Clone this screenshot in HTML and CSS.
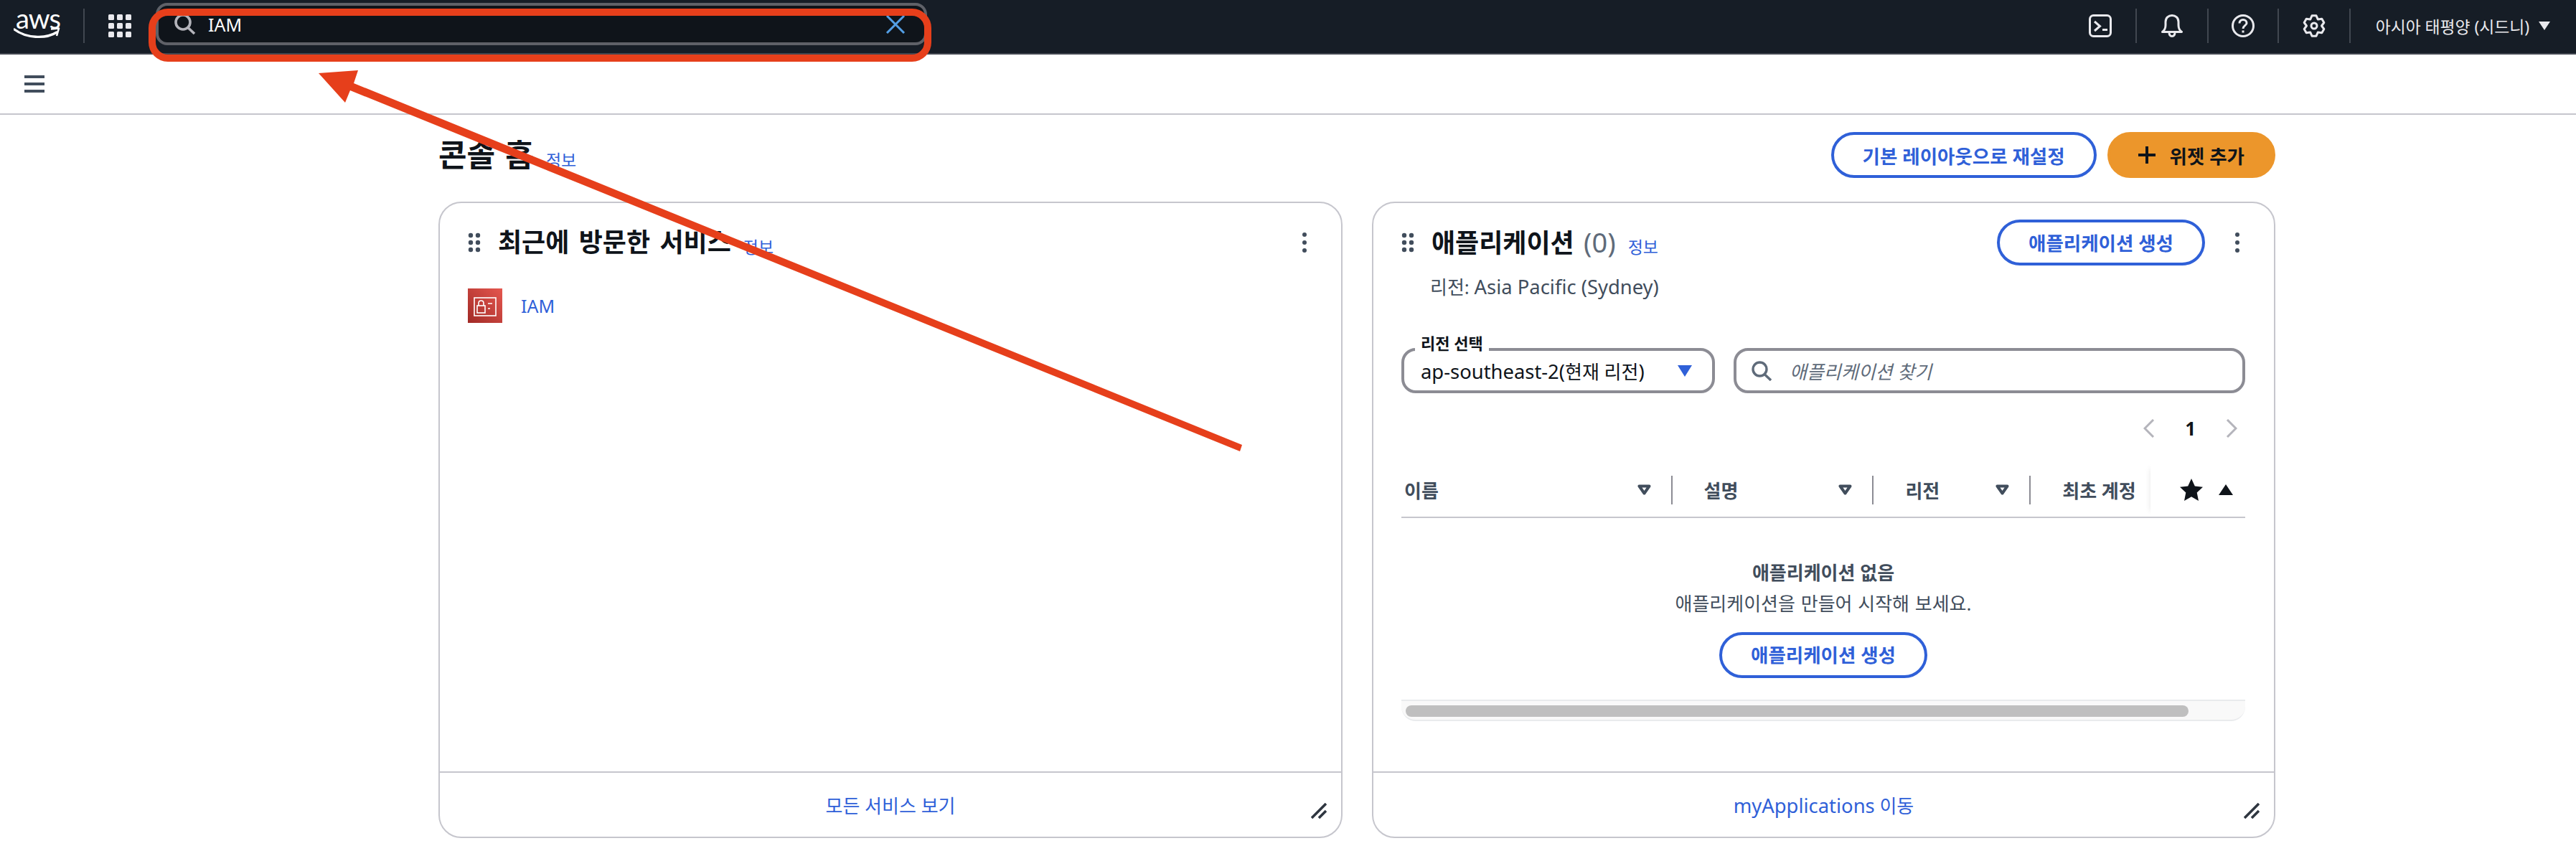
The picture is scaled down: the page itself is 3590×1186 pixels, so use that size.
FILE: index.html
```html
<!DOCTYPE html>
<html lang="ko">
	<head>
		<meta charset="utf-8">
		<title>콘솔 홈</title>
		<link rel="stylesheet" href="styles.css">
	</head>
	<body>
	<header class="topnav">
		<div class="logo">
			<span class="logo_text">aws</span>
			<svg class="logo_smile" width="66" height="20" viewBox="0 0 66 20"><path d="M1 4C17 16 44 18 60 8" fill="none" stroke="#fff" stroke-width="3.4" stroke-linecap="round"/><path d="M52 3.5L63 2.5L60 13" fill="none" stroke="#fff" stroke-width="2.6" stroke-linejoin="round"/></svg>
		</div>
		<span class="nav_sep"></span>
		<svg class="grid_icon" width="32" height="32" viewBox="0 0 32 32" fill="#e9e9ed"><rect width="8" height="8" rx="1.5"/><rect x="12" width="8" height="8" rx="1.5"/><rect x="24" width="8" height="8" rx="1.5"/><rect y="12" width="8" height="8" rx="1.5"/><rect x="12" y="12" width="8" height="8" rx="1.5"/><rect x="24" y="12" width="8" height="8" rx="1.5"/><rect y="24" width="8" height="8" rx="1.5"/><rect x="12" y="24" width="8" height="8" rx="1.5"/><rect x="24" y="24" width="8" height="8" rx="1.5"/></svg>
		<div class="nav_search">
			<svg width="32" height="30" viewBox="0 0 32 30" fill="none" stroke="#b4b4bb" stroke-width="3.6"><circle cx="13" cy="12" r="10"/><path d="M20 19.5L29 28"/></svg>
			<span class="nav_search_text">IAM</span>
			<svg class="nav_clear" width="28" height="26" viewBox="0 0 28 26" fill="none" stroke="#539fe5" stroke-width="3"><path d="M2 1L26 25M26 1L2 25"/></svg>
		</div>
		<div class="nav_right">
			<div class="nav_item">
				<svg width="32" height="32" viewBox="0 0 32 32" fill="none" stroke="#e9e9ed" stroke-width="3"><rect x="1.5" y="1.5" width="29" height="29" rx="5"/><path d="M8 10L15.5 16.5L8 23"/><path d="M19 21.5H26"/></svg>
			</div>
			<div class="nav_item">
				<svg width="30" height="32" viewBox="0 0 30 32" fill="none" stroke="#e9e9ed" stroke-width="3" stroke-linejoin="round"><path d="M1.5 24.5C5 22 6 19 6 15V10.5C6 5 10 1.5 15 1.5S24 5 24 10.5V15C24 19 25 22 28.5 24.5Z"/><path d="M11 25C11 28.5 12.5 30.5 15 30.5S19 28.5 19 25"/></svg>
			</div>
			<div class="nav_item nav_item_short">
				<svg width="32" height="32" viewBox="0 0 32 32" fill="none" stroke="#e9e9ed" stroke-width="3"><circle cx="16" cy="16" r="14.5"/><path d="M11 12.5C11 9.5 13 7.5 16 7.5S21 9.5 21 12.2C21 15.5 16 15.5 16 20"/><path d="M16 22.5V25.5"/></svg>
			</div>
			<div class="nav_item">
				<svg width="32" height="32" viewBox="0 0 32 32" fill="none" stroke="#e9e9ed" stroke-width="3" stroke-linejoin="round"><path d="M13 1.8H19L21.25 6.9L26.8 6.3L29.8 11.5L26.5 16L29.8 20.5L26.8 25.7L21.25 25.1L19 30.2H13L10.75 25.1L5.2 25.7L2.2 20.5L5.5 16L2.2 11.5L5.2 6.3L10.75 6.9Z"/><circle cx="16" cy="16" r="4"/></svg>
			</div>
			<div class="nav_region">아시아 태평양 (시드니)<span class="nav_caret"></span></div>
		</div>
	</header>

	<div class="subbar">
		<svg width="28" height="24" viewBox="0 0 28 24" fill="#414d5c"><rect width="28" height="4"/><rect y="10" width="28" height="4"/><rect y="20" width="28" height="4"/></svg>
	</div>

	<main class="page">
		<div class="page_head">
			<h1 class="page_title">콘솔 홈</h1>
			<a class="info">정보</a>
			<div class="page_actions">
				<a class="btn">기본 레이아웃으로 재설정</a>
				<a class="btn btn_primary">
					<svg width="24" height="24" viewBox="0 0 24 24" fill="none" stroke="#0f141a" stroke-width="4"><path d="M12 0V24M0 12H24"/></svg>
					위젯 추가
				</a>
			</div>
		</div>

		<div class="cards">
			<section class="card">
				<div class="card_head">
					<svg class="grip" width="18" height="28" viewBox="0 0 18 28" fill="#414d5c"><circle cx="4" cy="4" r="3.2"/><circle cx="14" cy="4" r="3.2"/><circle cx="4" cy="14" r="3.2"/><circle cx="14" cy="14" r="3.2"/><circle cx="4" cy="24" r="3.2"/><circle cx="14" cy="24" r="3.2"/></svg>
					<h2 class="card_title">최근에 방문한 서비스</h2>
					<a class="info">정보</a>
					<svg class="dots" width="6" height="28" viewBox="0 0 6 28" fill="#414d5c"><circle cx="3" cy="3" r="3"/><circle cx="3" cy="14" r="3"/><circle cx="3" cy="25" r="3"/></svg>
				</div>
				<div class="service">
					<svg width="48" height="48" viewBox="0 0 48 48">
						<defs><linearGradient id="iam_red" x1="0" y1="1" x2="1" y2="0"><stop offset="0" stop-color="#a12a26"/><stop offset="1" stop-color="#e5574f"/></linearGradient></defs>
						<rect width="48" height="48" fill="url(#iam_red)"/>
						<g fill="none" stroke="#fff" stroke-width="1.6"><rect x="9" y="13" width="30" height="25"/><rect x="13" y="24" width="11" height="10"/><path d="M15 24V20.5C15 18.5 16.5 17 18.5 17S22 18.5 22 20.5V24"/><path d="M28 21H34M28 28H31"/></g>
					</svg>
					<a class="service_link">IAM</a>
				</div>
				<div class="card_foot">
					<a class="foot_link">모든 서비스 보기</a>
					<svg class="resize" width="22" height="22" viewBox="0 0 22 22" fill="none" stroke="#2f3640" stroke-width="3.6"><path d="M1 21L21 1M11 21L21 11"/></svg>
				</div>
			</section>

			<section class="card">
				<div class="card_head">
					<svg class="grip" width="18" height="28" viewBox="0 0 18 28" fill="#414d5c"><circle cx="4" cy="4" r="3.2"/><circle cx="14" cy="4" r="3.2"/><circle cx="4" cy="14" r="3.2"/><circle cx="14" cy="14" r="3.2"/><circle cx="4" cy="24" r="3.2"/><circle cx="14" cy="24" r="3.2"/></svg>
					<h2 class="card_title">애플리케이션 <span class="count">(0)</span></h2>
					<a class="info">정보</a>
					<a class="btn card_btn">애플리케이션 생성</a>
					<svg class="dots dots_btn" width="6" height="28" viewBox="0 0 6 28" fill="#414d5c"><circle cx="3" cy="3" r="3"/><circle cx="3" cy="14" r="3"/><circle cx="3" cy="25" r="3"/></svg>
				</div>
				<p class="card_sub">리전: <span class="latin">Asia Pacific (Sydney)</span></p>

				<div class="app_body">
					<div class="filters">
						<div class="select">
							<span class="select_label">리전 선택</span>
							<span><span class="latin">ap-southeast-2(</span>현재 리전<span class="latin">)</span></span>
							<span class="select_caret"></span>
						</div>
						<div class="find">
							<svg width="28" height="28" viewBox="0 0 28 28" fill="none" stroke="#5f6b7a" stroke-width="3.4"><circle cx="11.5" cy="11.5" r="9.5"/><path d="M18 18.5L27 27"/></svg>
							<span class="find_text">애플리케이션 찾기</span>
						</div>
					</div>

					<div class="pager">
						<svg width="16" height="26" viewBox="0 0 16 26" fill="none" stroke="#b4b4bb" stroke-width="3"><path d="M14 1L2 13L14 25"/></svg>
						<span class="pager_num">1</span>
						<svg width="16" height="26" viewBox="0 0 16 26" fill="none" stroke="#b4b4bb" stroke-width="3"><path d="M2 1L14 13L2 25"/></svg>
					</div>

					<div class="thead">
						<div class="th th_name"><span>이름</span><svg class="sort" width="19" height="15" viewBox="0 0 19 15" fill="none" stroke="#414d5c" stroke-width="4" stroke-linejoin="round"><path d="M2.5 2.5H16.5L9.5 12.5Z"/></svg></div>
						<div class="th th_desc"><span>설명</span><svg class="sort" width="19" height="15" viewBox="0 0 19 15" fill="none" stroke="#414d5c" stroke-width="4" stroke-linejoin="round"><path d="M2.5 2.5H16.5L9.5 12.5Z"/></svg></div>
						<div class="th th_region"><span>리전</span><svg class="sort" width="19" height="15" viewBox="0 0 19 15" fill="none" stroke="#414d5c" stroke-width="4" stroke-linejoin="round"><path d="M2.5 2.5H16.5L9.5 12.5Z"/></svg></div>
						<div class="th th_acct"><span>최초 계정</span></div>
						<div class="th_fav">
							<svg width="32" height="31" viewBox="0 0 32 31" fill="#0f141a"><path d="M16 0L20.8 10.6L32 11.8L23.7 19.6L26 31L16 25.2L6 31L8.3 19.6L0 11.8L11.2 10.6Z"/></svg>
							<span class="sort_up"></span>
						</div>
					</div>

					<div class="empty">
						<strong class="empty_title">애플리케이션 없음</strong>
						<span class="empty_text">애플리케이션을 만들어 시작해 보세요.</span>
						<a class="btn empty_btn">애플리케이션 생성</a>
					</div>

					<div class="scrollbar"><div class="scrollbar_thumb"></div></div>
				</div>

				<div class="card_foot">
					<a class="foot_link"><span class="latin">myApplications</span> 이동</a>
					<svg class="resize" width="22" height="22" viewBox="0 0 22 22" fill="none" stroke="#2f3640" stroke-width="3.6"><path d="M1 21L21 1M11 21L21 11"/></svg>
				</div>
			</section>
		</div>
	</main>

	<svg class="markup" width="3590" height="1186" viewBox="0 0 3590 1186">
		<rect x="212" y="17" width="1081" height="64" rx="22" fill="none" stroke="#e63f1b" stroke-width="10"/>
		<path d="M444 102L499 98L493 116L1731 620L1728 629L488 126L481 143Z" fill="#e63f1b"/>
	</svg>
	</body>
</html>
```

FILE: styles.css
```css
html,
body {
  height: 100%;
}
body {
  margin: 0;
  background: #fff;
  color: #0f141a;
  font-family: "Noto Sans", "Noto Sans CJK KR", sans-serif;
  font-size: 26px;
  overflow: hidden;
}
h1,
h2,
p {
  margin: 0;
}
svg {
  display: block;
  flex: none;
}
.latin {
  font-size: 27.4px;
}

/* top nav */
.topnav {
  display: flex;
  align-items: center;
  box-sizing: border-box;
  height: 76px;
  padding: 0 36px 2px 19px;
  background: #161d26;
  border-bottom: 2px solid #424650;
}
.logo {
  width: 64px;
  height: 40px;
  position: relative;
}
.logo_text {
  display: block;
  font-family: Lato, sans-serif;
  font-size: 38px;
  line-height: 30px;
  margin: -6px 0 0 3px;
  letter-spacing: -1px;
  color: #fff;
}
.logo_smile {
  position: absolute;
  left: 0;
  top: 21px;
}
.nav_sep {
  width: 2px;
  height: 48px;
  margin: 0 33px;
  background: #414750;
}
.nav_search {
  display: flex;
  align-items: center;
  align-self: flex-start;
  box-sizing: border-box;
  width: 1075px;
  height: 59px;
  margin: 4px 0 0 34px;
  padding: 0 26px 0 21px;
  background: #0f141a;
  border: 4px solid #5f6168;
  border-radius: 16px;
}
.nav_search_text {
  margin-left: 16px;
  color: #fff;
  font-size: 25px;
}
.nav_clear {
  margin-left: auto;
}
.nav_right {
  display: flex;
  align-items: center;
  margin-left: auto;
}
.nav_item {
  display: flex;
  align-items: center;
  justify-content: center;
  width: 98px;
  height: 48px;
  border-right: 2px solid #414750;
}
.nav_item_short {
  width: 96px;
}
.nav_region {
  display: flex;
  align-items: center;
  margin-left: 35px;
  color: #e9e9ed;
  font-size: 22.8px;
}
.nav_caret {
  width: 0;
  height: 0;
  margin-left: 13px;
  border-left: 8px solid transparent;
  border-right: 8px solid transparent;
  border-top: 12px solid #e9e9ed;
}

.subbar {
  display: flex;
  align-items: center;
  box-sizing: border-box;
  height: 84px;
  padding: 0 0 0 34px;
  border-bottom: 2px solid #c6c6cd;
}

/* page */
.page {
  padding: 24px 419px 0 611px;
}
.page_head {
  display: flex;
  align-items: baseline;
  height: 64px;
}
.page_title {
  font-size: 43px;
  font-weight: 700;
  line-height: 64px;
  word-spacing: 3px;
}
.info {
  margin-left: 17px;
  color: #2f60d8;
  font-size: 23px;
}
.page_actions {
  display: flex;
  gap: 15px;
  margin-left: auto;
  align-self: flex-start;
}
.btn {
  display: flex;
  align-items: center;
  justify-content: center;
  box-sizing: border-box;
  height: 64px;
  padding: 0 40px;
  border: 4px solid #2f60d8;
  border-radius: 32px;
  color: #2f60d8;
  font-size: 26.5px;
  font-weight: 700;
  white-space: nowrap;
}
.btn_primary {
  gap: 20px;
  padding: 0 39px;
  border-color: #ec962b;
  background: #ec962b;
  color: #0f141a;
}

.cards {
  display: grid;
  grid-template-columns: 1260px 1259px;
  gap: 41px;
  margin-top: 33px;
  height: 887px;
}
.card {
  display: flex;
  flex-direction: column;
  box-sizing: border-box;
  border: 2px solid #c6c6cd;
  border-radius: 32px;
}
.card_head {
  display: flex;
  align-items: center;
  height: 63px;
  margin-top: 23px;
  padding: 0 48px 0 39px;
}
.grip {
  margin-right: 24px;
}
.card_title {
  font-size: 36px;
  font-weight: 700;
  line-height: 63px;
  white-space: nowrap;
  word-spacing: 4px;
}
.count {
  font-size: 38px;
  color: #5f6b7a;
  font-weight: 400;
}
.card_head .info {
  margin-left: 17px;
  padding-top: 10px;
}
.dots {
  margin-left: auto;
}
.card_btn {
  margin-left: auto;
  padding: 0 40px;
}
.dots_btn {
  margin-left: 42px;
}

.service {
  display: flex;
  align-items: center;
  gap: 26px;
  margin: 33px 0 0 39px;
}
.service_link {
  color: #2f60d8;
  font-size: 25px;
}

.card_sub {
  margin: 13px 0 0 79px;
  color: #414d5c;
  line-height: 36px;
}
.app_body {
  margin: 67px 40px 0 39px;
}
.filters {
  display: flex;
  gap: 26px;
}
.select,
.find {
  display: flex;
  align-items: center;
  box-sizing: border-box;
  height: 63px;
  border: 4px solid #8c8c94;
  border-radius: 20px;
}
.select {
  position: relative;
  width: 437px;
  padding: 0 28px 0 23px;
  white-space: nowrap;
}
.select_label {
  position: absolute;
  left: 15px;
  top: -27px;
  padding: 0 8px;
  background: #fff;
  font-size: 22px;
  font-weight: 700;
  line-height: 32px;
}
.select_caret {
  width: 0;
  height: 0;
  margin-left: auto;
  border-left: 10px solid transparent;
  border-right: 10px solid transparent;
  border-top: 16px solid #2f60d8;
}
.find {
  flex: 1;
  padding: 0 21px;
  gap: 25px;
}
.find_text {
  color: #5f6b7a;
  font-style: italic;
}
.pager {
  display: flex;
  align-items: center;
  justify-content: flex-end;
  height: 30px;
  margin: 34px 11px 0 0;
}
.pager_num {
  margin: 0 42px;
  font-size: 26px;
  font-weight: 700;
  line-height: 30px;
}

.thead {
  display: flex;
  align-items: center;
  height: 77px;
  margin-top: 33px;
  border-bottom: 2px solid #c6c6cd;
  box-sizing: border-box;
}
.th {
  display: flex;
  align-items: center;
  box-sizing: border-box;
  height: 40px;
  padding: 0 28px 0 44px;
  color: #414d5c;
  font-weight: 700;
  white-space: nowrap;
  border-right: 2px solid #8c8c94;
}
.th_name {
  width: 378px;
  padding-left: 4px;
}
.th_desc {
  width: 281px;
}
.th_region {
  width: 219px;
}
.th_acct {
  width: 167px;
  padding-right: 0;
  border-right: none;
  overflow: hidden;
}
.sort {
  margin-left: auto;
}
.th_fav {
  display: flex;
  align-items: center;
  box-sizing: border-box;
  width: 132px;
  height: 100%;
  padding: 0 17px 0 41px;
  background: #fff;
  box-shadow: -8px 0 8px -8px rgba(0, 0, 0, 0.1);
}
.sort_up {
  width: 0;
  height: 0;
  margin-left: auto;
  border-left: 10px solid transparent;
  border-right: 10px solid transparent;
  border-bottom: 15px solid #0f141a;
}
.empty {
  display: flex;
  flex-direction: column;
  align-items: center;
  padding-top: 58px;
  line-height: 36px;
  color: #414d5c;
}
.empty_title {
  font-weight: 700;
}
.empty_text {
  margin-top: 7px;
  word-spacing: 1px;
}
.empty_btn {
  margin-top: 22px;
}
.scrollbar {
  box-sizing: border-box;
  height: 30px;
  margin-top: 30px;
  padding: 6px 6px 0;
  background: #f9f9f9;
  border-top: 2px solid #e9ebed;
  border-bottom: 2px solid #e9ebed;
  border-radius: 0 0 20px 20px;
}
.scrollbar_thumb {
  width: 1091px;
  height: 16px;
  background: #bfbfbf;
  border-radius: 8px;
}

.card_foot {
  display: flex;
  align-items: center;
  justify-content: center;
  position: relative;
  height: 89px;
  margin-top: auto;
  border-top: 2px solid #c6c6cd;
}
.foot_link {
  color: #2f60d8;
}
.resize {
  position: absolute;
  right: 20px;
  bottom: 25px;
}

.markup {
  position: absolute;
  left: 0;
  top: 0;
  pointer-events: none;
}
```
